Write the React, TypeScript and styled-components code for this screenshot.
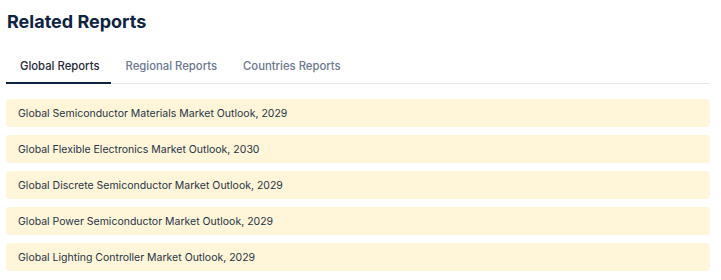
import { useState } from 'react';
import styled, { createGlobalStyle } from 'styled-components';

const GlobalStyle = createGlobalStyle`
  body {
    margin: 0;
    background: #ffffff;
    font-family: Inter, "Noto Sans", sans-serif;
  }
`;

const Section = styled.section`
  padding: 10px 11px 0 6px;
  display: flex;
  flex-direction: column;
`;

const Title = styled.h2`
  margin: 0 0 0 1px;
  font-size: 18px;
  line-height: 24px;
  font-weight: 700;
  color: #0e2440;
`;

const TabBar = styled.div`
  display: flex;
  margin-top: 24px;
  border-bottom: 1px solid #e5e7eb;
`;

const Tab = styled.button<{ $active?: boolean }>`
  background: none;
  border: none;
  padding: 0 12px 8px 14px;
  margin-bottom: -1px;
  font-family: inherit;
  font-size: 11.3px;
  line-height: 16px;
  font-weight: 500;
  cursor: pointer;
  color: ${(p) => (p.$active ? '#1f2937' : '#6b7890')};
  border-bottom: 2px solid ${(p) => (p.$active ? '#0e2440' : 'transparent')};
`;

const List = styled.div`
  display: flex;
  flex-direction: column;
  gap: 8px;
  margin-top: 15px;
`;

const Row = styled.a`
  display: flex;
  align-items: center;
  height: 28px;
  padding: 0 12px;
  border-radius: 4px;
  background: #fff5d9;
  color: #263445;
  font-size: 10.5px;
  text-decoration: none;
  cursor: pointer;
`;

const tabs = ['Global Reports', 'Regional Reports', 'Countries Reports'];

const reports = [
  'Global Semiconductor Materials Market Outlook, 2029',
  'Global Flexible Electronics Market Outlook, 2030',
  'Global Discrete Semiconductor Market Outlook, 2029',
  'Global Power Semiconductor Market Outlook, 2029',
  'Global Lighting Controller Market Outlook, 2029',
];

export default function App() {
  const [active, setActive] = useState(0);
  return (
    <>
      <GlobalStyle />
      <Section>
        <Title>Related Reports</Title>
        <TabBar>
          {tabs.map((t, i) => (
            <Tab key={t} $active={i === active} onClick={() => setActive(i)}>
              {t}
            </Tab>
          ))}
        </TabBar>
        <List>
          {reports.map((r) => (
            <Row key={r}>{r}</Row>
          ))}
        </List>
      </Section>
    </>
  );
}
